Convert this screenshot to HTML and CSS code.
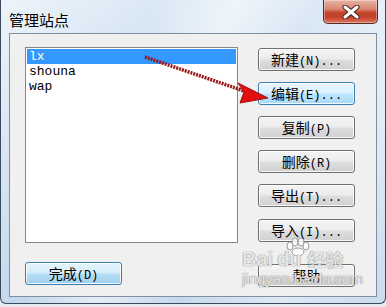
FILE: index.html
```html
<!DOCTYPE html>
<html lang="zh">
<head>
<meta charset="utf-8">
<title>管理站点</title>
<link rel="stylesheet" href="styles.css">
</head>
<body>
<div class="window">
  <div class="titlebar">
    <span class="title">管理站点</span>
    <button class="close" aria-label="关闭">
      <svg width="20" height="14" viewBox="0 0 20 14"><path d="M4 2 L16 12 M16 2 L4 12" stroke="#4a2020" stroke-width="5" stroke-linecap="round"/><path d="M4 2 L16 12 M16 2 L4 12" stroke="#ffffff" stroke-width="3" stroke-linecap="round"/></svg>
    </button>
  </div>
  <div class="client">
    <div class="left">
      <ul class="listbox">
        <li class="item selected">lx</li>
        <li class="item">shouna</li>
        <li class="item">wap</li>
      </ul>
      <button class="btn default"><span class="cj">完成</span>(D)</button>
    </div>
    <div class="right">
      <button class="btn"><span class="cj">新建</span>(N)...</button>
      <button class="btn hover"><span class="cj">编辑</span>(E)...</button>
      <button class="btn"><span class="cj">复制</span>(P)</button>
      <button class="btn"><span class="cj">删除</span>(R)</button>
      <button class="btn"><span class="cj">导出</span>(T)...</button>
      <button class="btn import"><span class="cj">导入</span>(I)...</button>
      <button class="btn help"><span class="cj">帮助</span></button>
    </div>
  </div>
  <svg class="arrow" width="386" height="307" viewBox="0 0 386 307">
    <line x1="145" y1="57" x2="250" y2="93" stroke="#9a1515" stroke-width="3.5" stroke-dasharray="2 1"/>
    <polygon points="268,98 238,83 244,92 240,103" fill="#e01010" stroke="#a01010" stroke-width="1"/>
  </svg>
  <svg class="paw" width="26" height="18" viewBox="0 0 26 18">
    <g fill="rgba(255,255,255,0.8)" stroke="#9a9a9a" stroke-width="1">
      <ellipse cx="5" cy="8" rx="3" ry="4"/>
      <ellipse cx="10" cy="4" rx="3" ry="4"/>
      <ellipse cx="16" cy="4" rx="3" ry="4"/>
      <ellipse cx="21" cy="8" rx="3" ry="4"/>
      <ellipse cx="13" cy="14" rx="6" ry="4"/>
    </g>
  </svg>
  <div class="watermark">
    <div class="wm-top">Bai<span class="gap"></span>du<span class="wm-cn">经验</span></div>
    <div class="wm-url">jingyan.baidu.com</div>
  </div>
</div>
</body>
</html>
```
FILE: styles.css
```css
* { box-sizing: border-box; }
html, body { margin: 0; padding: 0; }
body {
  width: 386px;
  height: 307px;
  overflow: hidden;
  background: #e6ecf2;
}
.window {
  position: relative;
  width: 386px;
  height: 304px;
  padding: 0 8px 6px 8px;
  border: 1px solid #3b4a5c;
  border-top: none;
  border-radius: 0 0 6px 6px;
  background:
    linear-gradient(115deg, rgba(255,255,255,0.55) 0%, rgba(255,255,255,0.1) 30%, rgba(255,255,255,0.6) 45%, rgba(255,255,255,0.15) 60%, rgba(255,255,255,0.5) 80%, rgba(255,255,255,0.2) 100%),
    linear-gradient(180deg, #d7e6f4 0%, #c9dcee 30%, #bcd2e8 100%);
  display: flex;
  flex-direction: column;
}
.titlebar {
  height: 33px;
  display: flex;
  align-items: flex-start;
  justify-content: space-between;
}
.title {
  margin-top: 10px;
  font-family: "Noto Sans CJK SC", sans-serif;
  font-size: 15px;
  line-height: 20px;
  color: #000;
}
.close {
  width: 55px;
  height: 24px;
  margin-right: -1px;
  padding: 0;
  border: 1px solid #5a2a22;
  border-top: none;
  border-radius: 0 0 5px 5px;
  background: linear-gradient(180deg, #e8b4a6 0%, #d98670 40%, #c3432a 55%, #c5412c 75%, #dc7a5e 100%);
  box-shadow: inset 0 0 0 1px rgba(255,255,255,0.35);
  display: flex;
  align-items: center;
  justify-content: center;
}
.client {
  flex: 1;
  background: #f0f0f0;
  border: 1px solid #7f8fa3;
  padding: 13px 21px 9px 15px;
  display: flex;
  gap: 20px;
}
.left {
  width: 214px;
  display: flex;
  flex-direction: column;
}
.listbox {
  list-style: none;
  margin: 0;
  padding: 1px;
  height: 196px;
  background: #fff;
  border: 1px solid #828790;
  font-family: "Liberation Mono", monospace;
  font-size: 13px;
}
.item {
  height: 15px;
  line-height: 15px;
  padding-left: 2px;
  color: #000;
}
.item.selected {
  background: #3399ff;
  color: #fff;
}
.right {
  width: 97px;
  padding-top: 1px;
  display: flex;
  flex-direction: column;
  gap: 11px;
}
.btn {
  width: 97px;
  height: 23px;
  padding: 0;
  border: 1px solid #707070;
  border-radius: 3px;
  background: linear-gradient(180deg, #f4f4f4 0%, #ececec 48%, #dedede 52%, #d0d0d0 100%);
  box-shadow: inset 0 0 0 1px rgba(255,255,255,0.8);
  font-family: "Liberation Mono", monospace;
  font-size: 12px;
  line-height: 21px;
  color: #000;
  text-align: center;
  white-space: nowrap;
}
.btn .cj {
  font-family: "Noto Sans CJK SC", sans-serif;
  font-size: 14px;
}
.btn.default {
  margin-top: 19px;
  border-color: #3c7fb1;
  background: linear-gradient(180deg, #e5f4fc 0%, #d4edfa 48%, #b7def6 52%, #9fd0ee 100%);
}
.btn.hover {
  border-color: #3c7fb1;
  background: linear-gradient(180deg, #eaf6fd 0%, #d9f0fc 48%, #bee6fd 52%, #a7d9f5 100%);
}
.btn.import { margin-top: 1px; }
.btn.help { margin-top: auto; }
.arrow {
  position: absolute;
  left: -1px;
  top: 0;
  pointer-events: none;
}
.paw {
  position: absolute;
  left: 284px;
  top: 238px;
  pointer-events: none;
}
.watermark {
  position: absolute;
  left: 241px;
  top: 248px;
  width: 116px;
  pointer-events: none;
  color: rgba(255,255,255,0.78);
  text-shadow: 0 0 1px #8c8c8c, 0 0 1px #8c8c8c;
  font-family: "Liberation Sans", sans-serif;
  font-weight: bold;
}
.wm-top {
  font-size: 20px;
  line-height: 22px;
  display: flex;
  align-items: flex-end;
}
.gap { width: 4px; }
.wm-cn {
  font-family: "Noto Sans CJK SC", sans-serif;
  font-size: 18px;
  line-height: 22px;
  margin-left: 6px;
}
.wm-url {
  margin-top: 1px;
  font-size: 15px;
  font-weight: normal;
  line-height: 16px;
}
```
